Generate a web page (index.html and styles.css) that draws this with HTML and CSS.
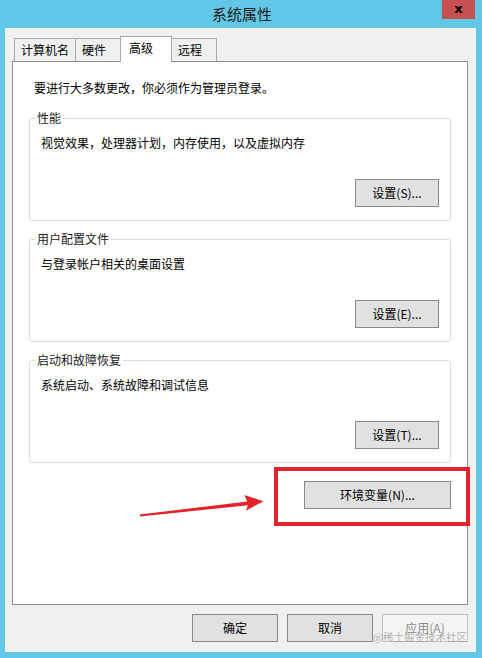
FILE: index.html
```html
<!doctype html>
<html lang="zh-CN">
    <head>
        <meta charset="UTF-8">
        <meta name="viewport" content="width=device-width, initial-scale=1.0">
        <title>系统属性</title>

        <link rel="stylesheet" href="styles.css">
    </head>
    <body>
        <div class="window">
            <div class="titlebar">
                <span class="titlebar__text">系统属性</span>
                <span class="titlebar__close">x</span>
            </div>

            <div class="client">
                <div class="tabs">
                    <div class="tab">计算机名</div>
                    <div class="tab">硬件</div>
                    <div class="tab tab--active">高级</div>
                    <div class="tab">远程</div>
                </div>

                <div class="panel">
                    <p class="notice">要进行大多数更改，你必须作为管理员登录。</p>

                    <fieldset class="group">
                        <legend class="group__title">性能</legend>
                        <p class="group__desc">视觉效果，处理器计划，内存使用，以及虚拟内存</p>
                        <div class="group__actions">
                            <button class="btn">设置(S)...</button>
                        </div>
                    </fieldset>

                    <fieldset class="group">
                        <legend class="group__title">用户配置文件</legend>
                        <p class="group__desc">与登录帐户相关的桌面设置</p>
                        <div class="group__actions">
                            <button class="btn">设置(E)...</button>
                        </div>
                    </fieldset>

                    <fieldset class="group">
                        <legend class="group__title">启动和故障恢复</legend>
                        <p class="group__desc">系统启动、系统故障和调试信息</p>
                        <div class="group__actions">
                            <button class="btn">设置(T)...</button>
                        </div>
                    </fieldset>

                    <div class="panel__footer">
                        <button class="btn btn--wide">环境变量(N)...</button>
                    </div>
                </div>

                <div class="dialog-buttons">
                    <button class="btn">确定</button>
                    <button class="btn">取消</button>
                    <button class="btn btn--disabled">应用(A)</button>
                </div>

                <span class="watermark">@稀土掘金技术社区</span>
            </div>
        </div>

        <!-- annotation: red arrow + frame round the env button -->
        <svg class="annotation" width="482" height="658" viewBox="0 0 482 658">
            <rect x="276" y="469" width="192" height="55" fill="none" stroke="#e3222b" stroke-width="4"/>
            <polygon fill="#e3222b" points="140,516.6 248,505.2 245.8,510.8 263.5,501.2 244.2,495 247.4,501.4 139.8,514.6"/>
        </svg>
    </body>
</html>
```

FILE: styles.css
```css
/* base */
:root {
    --frame: #62c7e6;
    --face: #f0f0f0;
    --tab-border: #a9a9a9;
    --panel-border: #8e8e8e;
    --group-border: #dcdcdc;
    --btn-face: #e1e1e1;
    --btn-border: #8a8a8a;
}

*,
*::before,
*::after {
    box-sizing: border-box;
    padding: 0;
    margin: 0;
}

body {
    inline-size: 482px;
    block-size: 658px;
    overflow: hidden;
    background-color: var(--frame);
    color: #000;
    font-family: "Noto Sans CJK SC", "Noto Sans", sans-serif;
    font-size: 12px;
    line-height: 16px;
}

/* window */
.window {
    position: relative;
}

.titlebar {
    display: grid;
    grid-template-columns: 1fr auto 1fr;
    block-size: 28px;
}

.titlebar__text {
    grid-column: 2;
    align-self: center;
    padding-inline-start: 2px;
    color: #1e1e1e;
    font-size: 15px;
    line-height: 20px;
}

.titlebar__close {
    grid-column: 3;
    justify-self: end;
    inline-size: 33px;
    block-size: 19px;
    margin-inline-end: 7px;
    background-color: #c75050;
    color: #000;
    font-family: "DejaVu Sans", sans-serif;
    font-size: 13px;
    font-weight: 700;
    line-height: 17px;
    text-align: center;
}

.client {
    position: relative;
    block-size: 624px;
    margin-inline: 5px 6px;
    padding: 9px 8px 10px 7px;
    background-color: var(--face);
}

/* tabs */
.tabs {
    display: flex;
    align-items: flex-end;
    block-size: 24px;
    padding-inline-start: 2px;
}

.tab {
    position: relative;
    min-inline-size: 46px;
    block-size: 23px;
    padding: 3px 6px 0;
    border: 1px solid var(--tab-border);
    border-block-end: none;
    background-color: var(--face);
    white-space: nowrap;
}

.tab + .tab {
    margin-inline-start: -1px;
}

.tab--active {
    z-index: 2;
    min-inline-size: 52px;
    block-size: 26px;
    margin-block-end: -1px;
    padding: 3px 8px 0;
    background-color: #fff;
}

/* panel */
.panel {
    display: flex;
    flex-direction: column;
    block-size: 544px;
    border: 1px solid var(--panel-border);
    background-color: #fff;
}

.notice {
    margin-block-start: 18px;
    margin-inline-start: 21px;
}

.group {
    margin: 14px 16px 0;
    padding: 0 11px 13px;
    border: 1px solid var(--group-border);
    border-radius: 3px;
}

.group + .group {
    margin-block-start: 10px;
}

.group__title {
    margin-inline-start: -6px;
    padding: 0 2px;
    color: #1a1a1a;
}

.group__desc {
    margin-block-start: 9px;
}

.group__actions {
    display: flex;
    justify-content: flex-end;
    margin-block-start: 28px;
}

.panel__footer {
    display: flex;
    justify-content: flex-end;
    margin: 18px 16px 0;
}

/* buttons */
.btn {
    inline-size: 84px;
    block-size: 28px;
    border: 1px solid var(--btn-border);
    background-color: var(--btn-face);
    color: #000;
    font: inherit;
}

.btn--wide {
    inline-size: 147px;
}

.btn--disabled {
    border-color: #c4c4c4;
    background-color: #f4f4f4;
    color: #8d8d8d;
}

.dialog-buttons {
    display: flex;
    justify-content: flex-end;
    gap: 9px;
    margin-block-start: 9px;
}

.dialog-buttons .btn {
    inline-size: 86px;
}

/* overlays */
.watermark {
    position: absolute;
    inset-block-end: 9px;
    inset-inline-end: 9px;
    color: rgb(120 120 120 / 55%);
    font-size: 10.5px;
    line-height: 12px;
    pointer-events: none;
}

.annotation {
    position: absolute;
    inset-block-start: 0;
    inset-inline-start: 0;
    pointer-events: none;
}
```
